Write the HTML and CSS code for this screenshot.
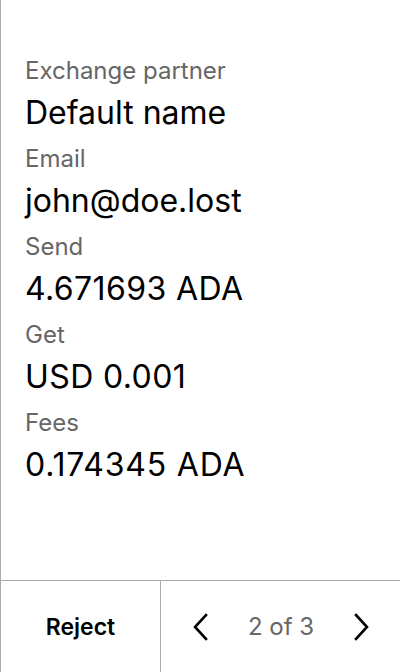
FILE: index.html
```html
<!DOCTYPE html>
<html>
<head>
<meta charset="utf-8">
<link rel="stylesheet" href="styles.css">
</head>
<body>
<div class="screen">
  <div class="content">
    <div class="field">
      <div class="label">Exchange partner</div>
      <div class="value">Default name</div>
    </div>
    <div class="field">
      <div class="label">Email</div>
      <div class="value">john@doe.lost</div>
    </div>
    <div class="field">
      <div class="label">Send</div>
      <div class="value num">4.671693 ADA</div>
    </div>
    <div class="field">
      <div class="label">Get</div>
      <div class="value num">USD 0.001</div>
    </div>
    <div class="field">
      <div class="label">Fees</div>
      <div class="value num wide">0.174345 ADA</div>
    </div>
  </div>
  <div class="footer">
    <div class="reject">Reject</div>
    <div class="pager">
      <svg class="chev" width="16" height="28" viewBox="0 0 16 28"><path d="M14 2 L3 14 L14 26" fill="none" stroke="#000" stroke-width="2.6" stroke-linecap="square"/></svg>
      <span class="count">2 of 3</span>
      <svg class="chev" width="16" height="28" viewBox="0 0 16 28"><path d="M2 2 L13 14 L2 26" fill="none" stroke="#000" stroke-width="2.6" stroke-linecap="square"/></svg>
    </div>
  </div>
</div>
</body>
</html>
```

FILE: styles.css
```css
html, body {
  margin: 0;
  padding: 0;
  background: #fff;
}
body {
  font-family: Inter, "Noto Sans", sans-serif;
  color: #000;
}
.screen {
  width: 399px;
  height: 672px;
  border-left: 1px solid #aaa;
  display: flex;
  flex-direction: column;
}
.content {
  flex: 1;
  padding: 57px 0 0 24px;
  display: flex;
  flex-direction: column;
}
.field {
  display: flex;
  flex-direction: column;
  height: 88px;
}
.label {
  font-size: 24px;
  line-height: 28px;
  height: 28px;
  color: #666;
}
.value {
  font-size: 32px;
  line-height: 56px;
  height: 56px;
}
.value.num {
  letter-spacing: 0.4px;
}
.value.wide {
  letter-spacing: 0.8px;
}
.footer {
  height: 91px;
  border-top: 1px solid #aaa;
  display: flex;
}
.reject {
  width: 159px;
  border-right: 1px solid #aaa;
  display: flex;
  align-items: center;
  justify-content: center;
  font-size: 23px;
  font-weight: 600;
}
.pager {
  flex: 1;
  display: flex;
  align-items: center;
  justify-content: space-between;
  padding: 0 30px 0 31px;
}
.count {
  font-size: 24px;
  color: #666;
}
.chev {
  display: block;
}
```
